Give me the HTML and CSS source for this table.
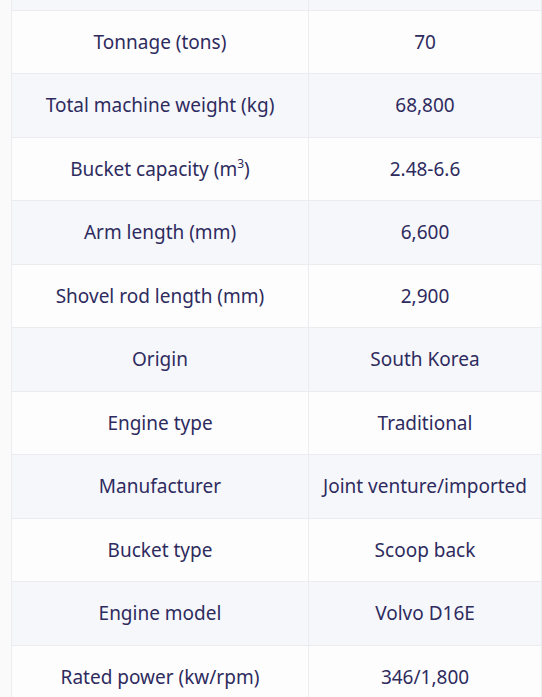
FILE: index.html
```html
<!DOCTYPE html>
<html>
<head>
<meta charset="utf-8">
<link rel="stylesheet" href="styles.css">
</head>
<body>
<div class="wrap">
<table class="spec">
<tbody>
<tr class="alt top"><td></td><td></td></tr>
<tr><td>Tonnage (tons)</td><td>70</td></tr>
<tr class="alt"><td>Total machine weight (kg)</td><td>68,800</td></tr>
<tr><td>Bucket capacity (m<sup>3</sup>)</td><td>2.48-6.6</td></tr>
<tr class="alt"><td>Arm length (mm)</td><td>6,600</td></tr>
<tr><td>Shovel rod length (mm)</td><td>2,900</td></tr>
<tr class="alt"><td>Origin</td><td>South Korea</td></tr>
<tr><td>Engine type</td><td>Traditional</td></tr>
<tr class="alt"><td>Manufacturer</td><td>Joint venture/imported</td></tr>
<tr><td>Bucket type</td><td>Scoop back</td></tr>
<tr class="alt"><td>Engine model</td><td>Volvo D16E</td></tr>
<tr><td>Rated power (kw/rpm)</td><td>346/1,800</td></tr>
</tbody>
</table>
</div>
</body>
</html>
```
FILE: styles.css
```css
html, body {
  margin: 0;
  padding: 0;
  background: #fafafa;
  overflow: hidden;
}
.wrap {
  padding-left: 11px;
  margin-top: -54px;
}
.spec {
  width: 531px;
  border-collapse: collapse;
  font-family: "Noto Sans", sans-serif;
  font-size: 19px;
  color: #2e2b5e;
  table-layout: fixed;
}
.spec td {
  height: 62.5px;
  padding: 0;
  text-align: center;
  vertical-align: middle;
  border: 1px solid #ececf0;
  background: #fdfdfd;
}
.spec td:first-child {
  width: 296px;
}
.spec tr.alt td {
  background: #f6f7fb;
}
.spec sup {
  font-size: 12px;
  line-height: 0;
  vertical-align: 8px;
}
```
